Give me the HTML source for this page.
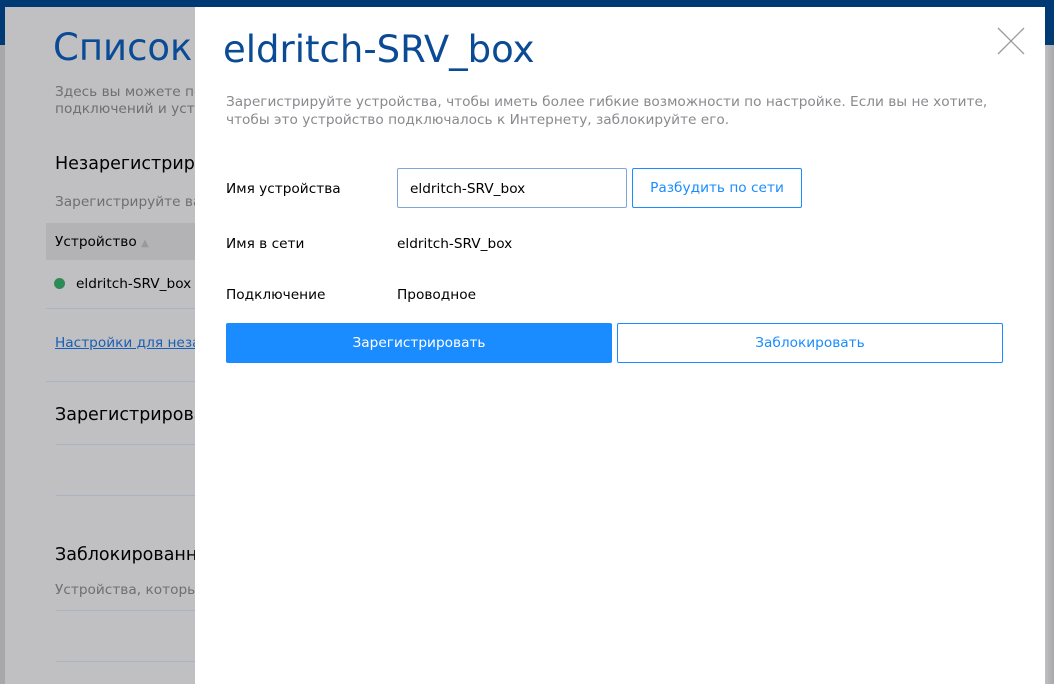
<!DOCTYPE html>
<html><head><meta charset="utf-8"><style>
*{margin:0;padding:0;box-sizing:border-box}
body{width:1054px;height:684px;overflow:hidden;position:relative;background:#c0c0c3;font-family:"DejaVu Sans","Liberation Sans",sans-serif;font-size:13.7px;color:#000}
.a{position:absolute;white-space:nowrap}
.line{position:absolute;height:1px;background:#a9b3c4}
</style></head><body>
<div class="a" style="left:0;top:0;width:1054px;height:7px;background:#003a75"></div>
<div class="a" style="left:0;top:0;width:5px;height:45px;background:#003a75"></div>
<div class="a" style="left:0;top:45px;width:5px;height:639px;background:#a8a8aa"></div>
<div class="a" style="left:1045px;top:0;width:9px;height:45px;background:#003a75"></div>
<div class="a" style="left:1045px;top:45px;width:9px;height:639px;background:linear-gradient(90deg,#c0c0c3,#a8a8aa)"></div>

<div class="a" style="left:53px;top:26px;font-size:37px;color:#0b4a94">Список</div>
<div class="a" style="left:55px;top:84px;color:#6f6f73;line-height:17px">Здесь вы можете по<br>подключений и уст</div>
<div class="a" style="left:55px;top:154px;font-size:17.5px">Незарегистрир</div>
<div class="a" style="left:55px;top:194px;color:#6f6f73">Зарегистрируйте ва</div>
<div class="a" style="left:46px;top:223px;width:160px;height:37px;background:#b3b3b6"></div>
<div class="a" style="left:55px;top:234px">Устройство <span style="color:#999;font-size:10px">▲</span></div>
<div class="a" style="left:54px;top:278px;width:11px;height:11px;border-radius:50%;background:#2e8b57"></div>
<div class="a" style="left:76px;top:276px">eldritch-SRV_box</div>
<div class="line" style="left:46px;top:308px;width:150px"></div>
<div class="a" style="left:55px;top:335px;color:#1a5fb4;text-decoration:underline">Настройки для неза</div>
<div class="line" style="left:46px;top:381px;width:150px"></div>
<div class="a" style="left:55px;top:405px;font-size:17.5px">Зарегистрирова</div>
<div class="line" style="left:56px;top:444px;width:140px"></div>
<div class="line" style="left:56px;top:495px;width:140px"></div>
<div class="a" style="left:55px;top:545px;font-size:17.5px">Заблокированн</div>
<div class="a" style="left:55px;top:582px;color:#6f6f73">Устройства, которы</div>
<div class="line" style="left:56px;top:610px;width:140px"></div>
<div class="line" style="left:56px;top:661px;width:140px"></div>

<div class="a" style="left:195px;top:7px;width:850px;height:677px;background:#fff">
  <div class="a" style="left:28px;top:21px;font-size:37px;color:#0b4a94">eldritch-SRV_box</div>
  <svg class="a" style="left:802px;top:20px" width="28" height="28"><path d="M1 1L27 27M27 1L1 27" stroke="#999" stroke-width="1.3"/></svg>
  <div class="a" style="left:31px;top:86px;color:#8a8a8e;line-height:18px">Зарегистрируйте устройства, чтобы иметь более гибкие возможности по настройке. Если вы не хотите,<br>чтобы это устройство подключалось к Интернету, заблокируйте его.</div>
  <div class="a" style="left:31px;top:174px">Имя устройства</div>
  <div class="a" style="left:202px;top:161px;width:230px;height:40px;border:1px solid #7ea6d6;border-radius:2px;padding:12px 0 0 12px">eldritch-SRV_box</div>
  <div class="a" style="left:437px;top:161px;width:170px;height:40px;border:1px solid #1a8cff;border-radius:2px;color:#1a8cff;text-align:center;line-height:39px">Разбудить по сети</div>
  <div class="a" style="left:31px;top:229px">Имя в сети</div>
  <div class="a" style="left:202px;top:229px">eldritch-SRV_box</div>
  <div class="a" style="left:31px;top:280px">Подключение</div>
  <div class="a" style="left:202px;top:280px">Проводное</div>
  <div class="a" style="left:31px;top:316px;width:386px;height:40px;background:#1a8cff;border-radius:2px;color:#fff;text-align:center;line-height:41px">Зарегистрировать</div>
  <div class="a" style="left:422px;top:316px;width:386px;height:40px;border:1px solid #1a8cff;border-radius:2px;color:#1a8cff;text-align:center;line-height:39px">Заблокировать</div>
</div>
</body></html>
